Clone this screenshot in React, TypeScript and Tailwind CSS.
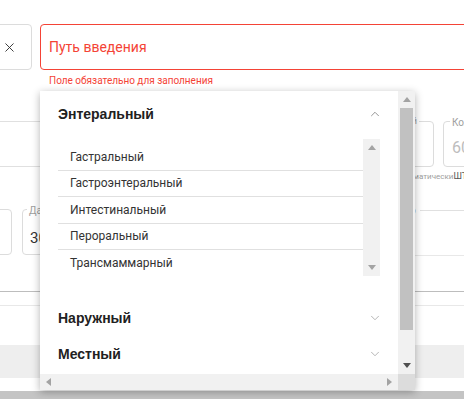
import { X, ChevronUp, ChevronDown } from "lucide-react";

const items = ["Гастральный", "Гастроэнтеральный", "Интестинальный", "Пероральный", "Трансмаммарный"];

function Tri({ dir, className }: { dir: "up" | "down" | "left" | "right"; className: string }) {
    const pts = {
        up: "0,5 4,0 8,5",
        down: "0,0 8,0 4,5",
        left: "5,0 5,8 0,4",
        right: "0,0 0,8 5,4",
    }[dir];
    const w = dir === "up" || dir === "down" ? 8 : 5;
    const h = dir === "up" || dir === "down" ? 5 : 8;
    return (
        <svg width={w} height={h} viewBox={`0 0 ${w} ${h}`} className={className}>
            <polygon points={pts} fill="currentColor" />
        </svg>
    );
}

function Group({ title }: { title: string }) {
    return (
        <div className="h-[36px] flex items-center justify-between pl-[18px] pr-[16px]">
            <span className="font-['Liberation_Sans'] font-bold text-[14px] text-[#212121]">{title}</span>
            <ChevronDown size={14} strokeWidth={1.3} className="text-[#9e9e9e]" />
        </div>
    );
}

export default function App() {
    return (
        <div className="relative w-[464px] h-[399px] overflow-hidden bg-white font-['Roboto',sans-serif]">
            {/* form behind */}
            <div className="pt-[24px] flex gap-[8px]">
                <div className="-ml-[8px] w-[40px] h-[46px] shrink-0 border border-[#dcdcdc] rounded-[4px] flex items-center pl-[9px]">
                    <X size={15} strokeWidth={1.5} className="text-[#333]" />
                </div>
                <div className="w-[460px] shrink-0 h-[46px] border border-[#f44336] rounded-[4px] flex items-center pl-[8px]">
                    <span className="text-[14px] text-[#f44336]">Путь введения</span>
                </div>
            </div>
            <div className="pl-[49px] pt-[5px] text-[10px] leading-[12px] text-[#f44336]">Поле обязательно для заполнения</div>

            <div className="mt-[34px] flex h-[46px]">
                <div className="w-[400px] shrink-0 border-y border-[#e0e0e0]" />
                <div className="-ml-[10px] w-[44px] shrink-0 border border-[#dcdcdc] rounded-[4px] relative">
                    <span className="absolute -top-[7px] right-[14px] px-[2px] bg-white text-[9px] text-[#9e9e9e]">й</span>
                </div>
                <div className="ml-[9px] w-[60px] shrink-0 border border-[#dcdcdc] rounded-[4px] relative pl-[8px] pt-[14px]">
                    <span className="absolute -top-[7px] left-[6px] px-[2px] bg-white text-[10px] text-[#9e9e9e]">Количество</span>
                    <span className="text-[16px] text-[#bdbdbd]">60</span>
                </div>
            </div>
            <div className="flex h-[20px] items-center">
                <span className="ml-[413px] text-[8px] text-[#9e9e9e]">матически</span>
                <span className="text-[9px] text-[#555]">ШТ</span>
            </div>

            <div className="mt-[22px] flex h-[46px]">
                <div className="-ml-[10px] w-[22px] shrink-0 border border-[#dcdcdc] rounded-[4px]" />
                <div className="ml-[10px] w-[100px] shrink-0 border border-[#dcdcdc] rounded-[4px] relative pl-[7px] pt-[16px]">
                    <span className="absolute -top-[7px] left-[4px] px-[2px] bg-white text-[10px] text-[#9e9e9e]">Дата</span>
                    <span className="text-[15px] text-[#333]">30</span>
                </div>
                <div className="ml-[282px] flex-1 relative">
                    <div className="absolute -top-[6px] left-0 right-0 flex items-center gap-[4px]">
                        <span className="text-[10px] text-[#9e9e9e]">до</span>
                        <div className="flex-1 border-t border-[#e0e0e0]" />
                    </div>
                </div>
            </div>
            <div className="ml-[415px] border-t border-[#e8e8e8]" />
            <div className="mt-[35px] border-t border-[#bdbdbd]" />
            <div className="mt-[13px] border-t border-[#e8e8e8]" />
            <div className="mt-[39px] h-[33px] bg-[#eeeeee]" />
            <div className="h-[13px] bg-white" />
            <div className="h-[10px] bg-[#c4c4c4]" />

            {/* dropdown */}
            <div className="absolute left-[40px] top-[91px] w-[375px] h-[299px] bg-white shadow-[0_2px_8px_rgba(0,0,0,0.3)] flex flex-col">
                <div className="flex flex-1 min-h-0">
                    <div className="flex-1">
                        <div className="h-[46px] flex items-center justify-between pl-[18px] pr-[16px]">
                            <span className="font-['Liberation_Sans'] font-bold text-[14px] text-[#212121]">Энтеральный</span>
                            <ChevronUp size={14} strokeWidth={1.3} className="text-[#757575]" />
                        </div>
                        <div className="mt-[2px] ml-[18px] mr-[18px] h-[137px] flex">
                            <div className="flex-1 pt-[5px]">
                                {items.map((it, i) => (
                                    <div
                                        key={it}
                                        className={`h-[26.5px] flex items-center pl-[12px] text-[12px] text-[#333] ${i < items.length - 1 ? "border-b border-[#e0e0e0]" : ""}`}
                                    >
                                        {it}
                                    </div>
                                ))}
                            </div>
                            <div className="w-[17px] bg-[#f1f1f1] flex flex-col items-center justify-between py-[6px]">
                                <Tri dir="up" className="text-[#a3a3a3]" />
                                <Tri dir="down" className="text-[#a3a3a3]" />
                            </div>
                        </div>
                        <div className="mt-[24px]">
                            <Group title="Наружный" />
                            <Group title="Местный" />
                        </div>
                    </div>
                    <div className="w-[17px] bg-[#f1f1f1] flex flex-col items-center">
                        <div className="h-[17px] flex items-center">
                            <Tri dir="up" className="text-[#a3a3a3]" />
                        </div>
                        <div className="w-[13px] h-[222px] bg-[#c1c1c1]" />
                        <div className="flex-1" />
                        <div className="h-[17px] flex items-center">
                            <Tri dir="down" className="text-[#505050]" />
                        </div>
                    </div>
                </div>
                <div className="h-[16px] flex bg-[#f1f1f1]">
                    <div className="flex-1 flex items-center justify-between px-[6px]">
                        <Tri dir="left" className="text-[#a3a3a3]" />
                        <Tri dir="right" className="text-[#a3a3a3]" />
                    </div>
                    <div className="w-[17px] bg-[#dcdcdc]" />
                </div>
            </div>
        </div>
    );
}
